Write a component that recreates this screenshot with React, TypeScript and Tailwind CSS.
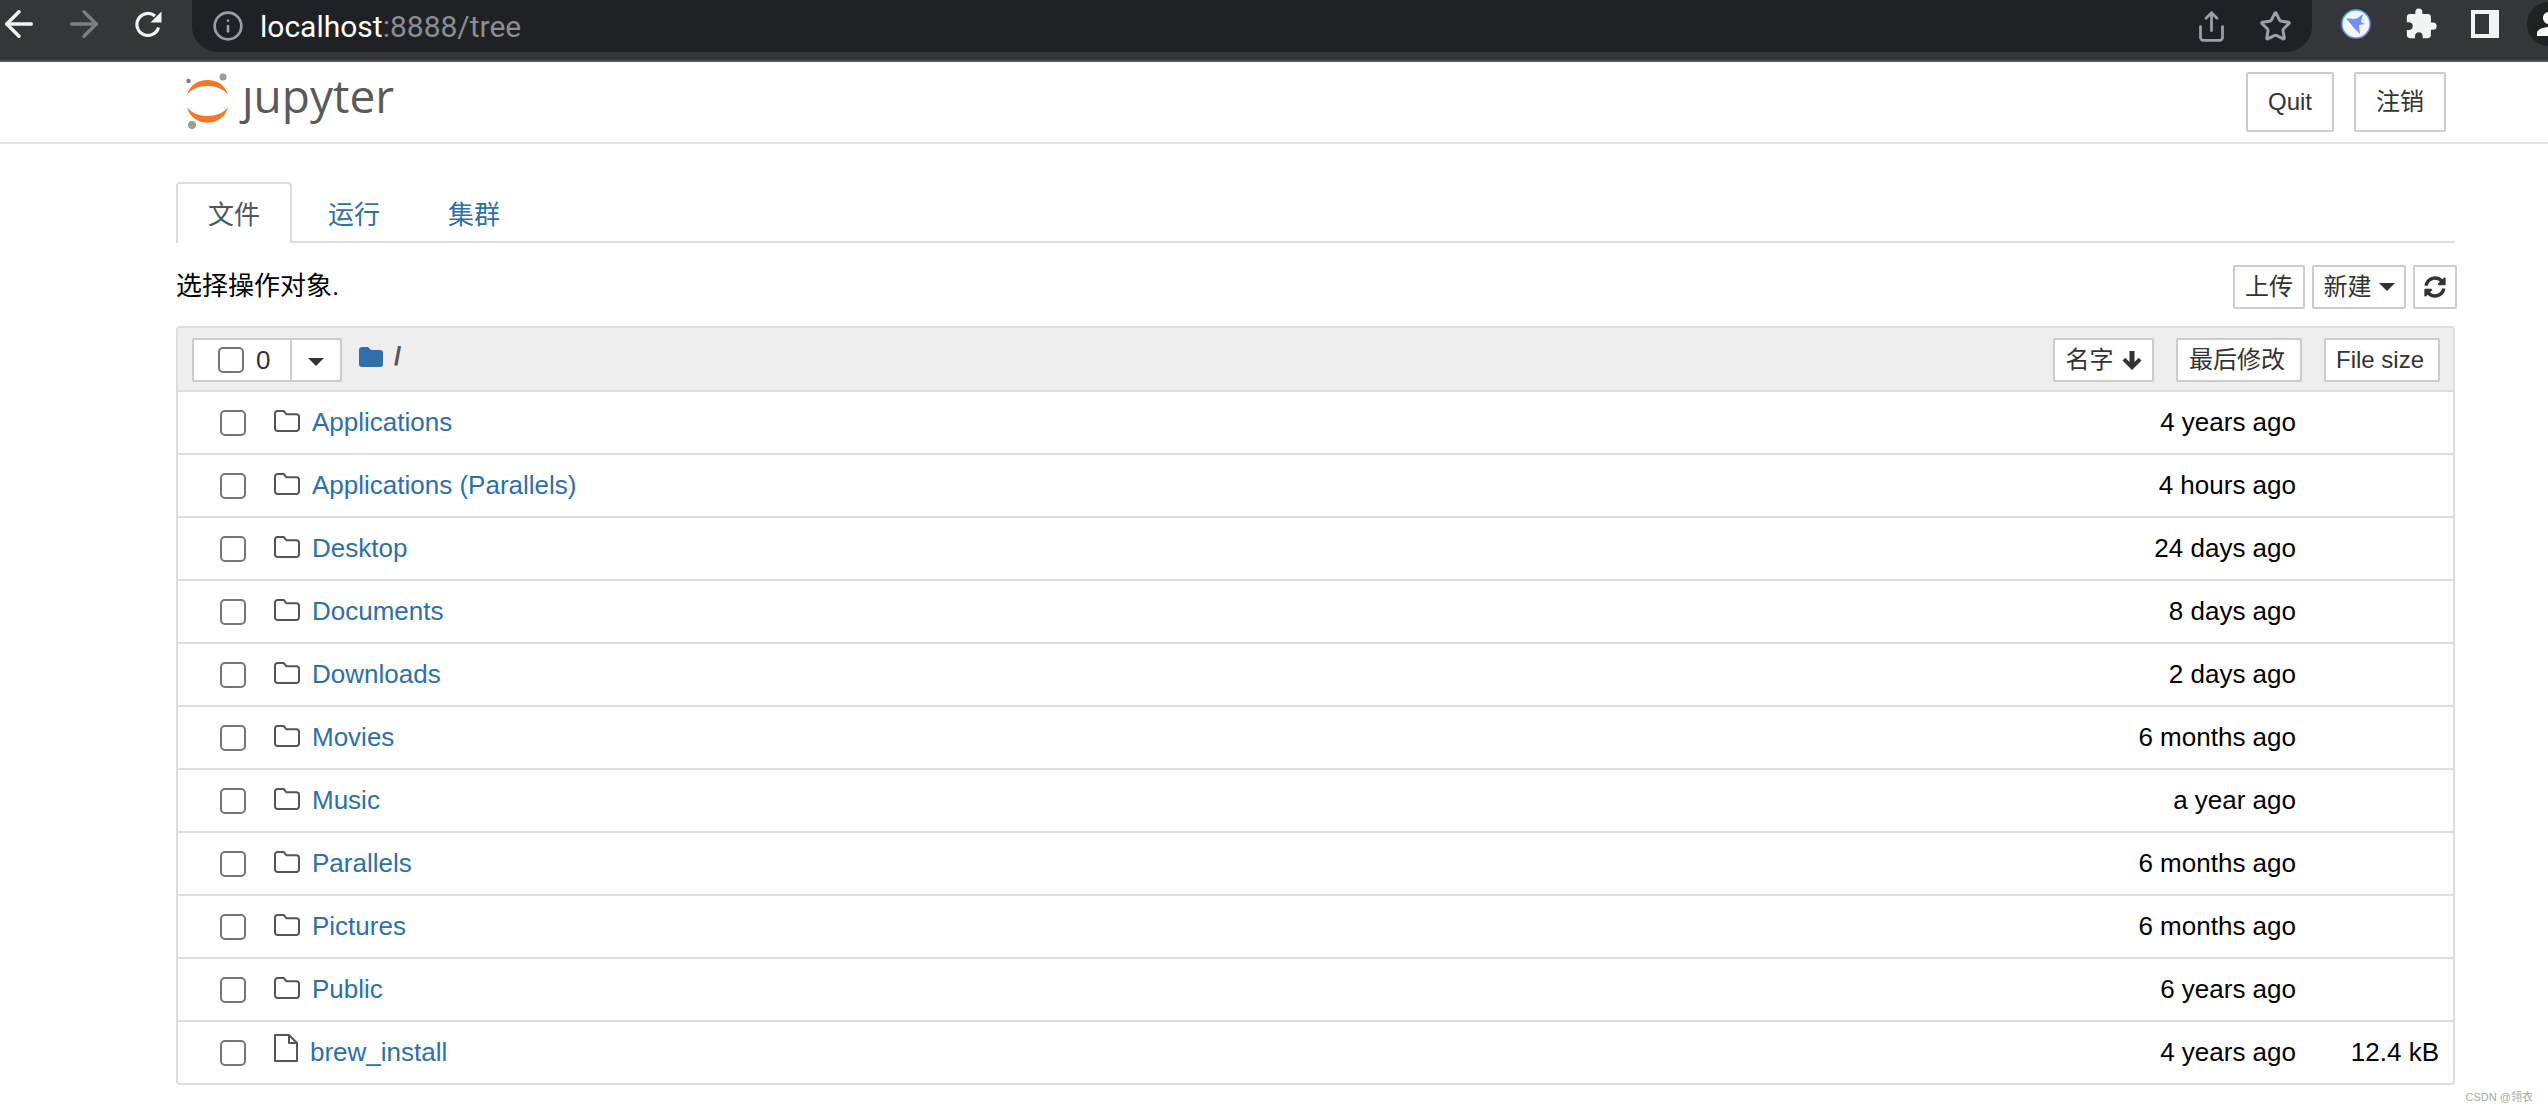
import { ArrowLeft, ArrowRight, Info, Share, Star } from "lucide-react";
import { FaSyncAlt } from "react-icons/fa";
import { MdExtension, MdPerson } from "react-icons/md";

const FONT = "font-['Liberation_Sans','Noto_Sans_CJK_SC',sans-serif]";

const ROWS = [
  { name: "Applications", time: "4 years ago" },
  { name: "Applications (Parallels)", time: "4 hours ago" },
  { name: "Desktop", time: "24 days ago" },
  { name: "Documents", time: "8 days ago" },
  { name: "Downloads", time: "2 days ago" },
  { name: "Movies", time: "6 months ago" },
  { name: "Music", time: "a year ago" },
  { name: "Parallels", time: "6 months ago" },
  { name: "Pictures", time: "6 months ago" },
  { name: "Public", time: "6 years ago" },
  { name: "brew_install", time: "4 years ago", size: "12.4 kB", file: true },
];

function FolderOutline() {
  return (
    <svg width="26" height="22" viewBox="0 0 26 22" fill="none" stroke="#555" strokeWidth="2" strokeLinejoin="round">
      <path d="M3.500 1h6.200l2.600 3.200h10.200a2.500 2.500 0 0 1 2.500 2.500v11.800a2.500 2.500 0 0 1-2.500 2.500h-19A2.500 2.500 0 0 1 1 18.500v-15A2.500 2.500 0 0 1 3.500 1z" />
    </svg>
  );
}

function FolderSolid() {
  return (
    <svg width="24" height="20" viewBox="0 0 24 20" fill="#2f6fab">
      <path d="M3 0h6l3 3h9a3 3 0 0 1 3 3v11a3 3 0 0 1-3 3H3a3 3 0 0 1-3-3V3a3 3 0 0 1 3-3z" />
    </svg>
  );
}

function FileOutline() {
  return (
    <svg width="24" height="28" viewBox="0 0 24 28" fill="none" stroke="#555" strokeWidth="2" strokeLinejoin="round">
      <path d="M1 1h14l8 8v18H1z" />
      <path d="M15 1v8h8" />
    </svg>
  );
}

function SortArrow() {
  return (
    <svg width="20" height="19" viewBox="0 0 20 19" fill="#333">
      <path d="M10 19 0.500 9.500 3.300 6.700 7.500 10.900V0h5v10.900l4.200-4.200 2.800 2.800z" />
    </svg>
  );
}

function ReloadIcon() {
  return (
    <svg width="28" height="28" viewBox="0 0 28 28" fill="none">
      <path d="M24.500 17.500A11 11 0 1 1 21 6" stroke="#f1f3f4" strokeWidth="3.200" />
      <path d="M27.500 1.500V12.500H16.500z" fill="#f1f3f4" />
    </svg>
  );
}

function JupyterLogo() {
  return (
    <svg width="44" height="58" viewBox="0 0 44 58">
      <circle cx="37" cy="5" r="3.500" fill="#9a9a9a" />
      <circle cx="2.500" cy="9" r="2.200" fill="#7a7a7a" />
      <circle cx="6" cy="53" r="4" fill="#9a9a9a" />
      <path d="M1 23C6 3 37 3 42 23C34 11 9 11 1 23Z" fill="#f37726" />
      <path d="M1 35C9 47 34 47 42 35C37 56 6 56 1 35Z" fill="#f37726" />
    </svg>
  );
}

function BirdLogo() {
  return (
    <svg width="30" height="30" viewBox="0 0 30 30">
      <defs>
        <linearGradient id="ring" x1="0" y1="0" x2="1" y2="1">
          <stop offset="0" stopColor="#38b6f0" />
          <stop offset="1" stopColor="#a878f0" />
        </linearGradient>
        <linearGradient id="bird" x1="0" y1="0" x2="1" y2="1">
          <stop offset="0" stopColor="#4f9cf0" />
          <stop offset="1" stopColor="#9a80f2" />
        </linearGradient>
      </defs>
      <circle cx="15" cy="15" r="14" fill="#f4f6fd" stroke="url(#ring)" strokeWidth="1.500" />
      <path d="M5 9 L11 10 L16 9.500 L22 5 L20 13 L24 15 L18 16 L19 25 L13 19 L9 14 Z" fill="url(#bird)" />
    </svg>
  );
}

function Checkbox() {
  return <span className="block h-[26px] w-[26px] shrink-0 rounded-[5px] border-2 border-[#767676] bg-white" />;
}

function Caret() {
  return <span className="inline-block h-0 w-0 border-x-[8px] border-t-[8px] border-x-transparent border-t-[#333]" />;
}

function Btn({ className, children }: { className: string; children: React.ReactNode }) {
  return (
    <button className={`flex h-[44px] items-center justify-center rounded-[2px] border-2 border-[#ccc] bg-white text-[24px] text-[#333] ${className}`}>
      {children}
    </button>
  );
}

function BrowserBar() {
  return (
    <div className="flex h-[62px] items-start border-b-2 border-[#55565a] bg-[#35363a]">
      <div className="flex h-[52px] w-[192px] shrink-0 items-center pb-[4px]">
        <ArrowLeft className="-ml-[2px] h-[42px] w-[42px] text-[#f1f3f4]" strokeWidth={2} />
        <ArrowRight className="ml-[23px] h-[42px] w-[42px] text-[#7d7e81]" strokeWidth={2} />
        <span className="ml-[29px]"><ReloadIcon /></span>
      </div>
      <div className="flex h-[52px] w-[2120px] shrink-0 items-center rounded-b-[26px] bg-[#202124] pl-[20px] font-['Roboto',sans-serif] text-[30px]">
        <Info className="h-[32px] w-[32px] text-[#9aa0a6]" strokeWidth={2} />
        <span className="ml-[16px] text-white">localhost</span>
        <span className="text-[#8b8d90]">:8888/tree</span>
        <Share className="ml-auto h-[33px] w-[33px] text-[#9aa0a6]" strokeWidth={2} />
        <Star className="ml-[31px] mr-[20px] h-[33px] w-[33px] text-[#9aa0a6]" strokeWidth={2.200} />
      </div>
      <div className="flex h-[52px] flex-1 items-center pb-[4px]">
        <span className="ml-[29px]"><BirdLogo /></span>
        <MdExtension className="ml-[33px] text-[#f1f3f4]" size={34} />
        <span className="ml-[33px] block h-[28px] w-[28px] shrink-0 border-[4px] border-r-[10px] border-[#f1f3f4]" />
        <span className="ml-[28px] flex h-[44px] w-[44px] shrink-0 items-center justify-center rounded-full bg-[#202124]">
          <MdPerson className="shrink-0 text-white" size={36} />
        </span>
      </div>
    </div>
  );
}

function NavBar() {
  return (
    <div className="flex h-[82px] items-start border-b-2 border-[#e7e7e7] bg-white pl-[186px] pr-[102px]">
      <div className="mt-[10px]"><JupyterLogo /></div>
      <span className="ml-[12px] mt-[2px] font-['Open_Sans',sans-serif] text-[46px] font-normal leading-[62px] text-[#5a5a5a]">ȷupyter</span>
      <div className="ml-auto mt-[10px] flex gap-[20px]">
        <Btn className="h-[60px] w-[88px]">Quit</Btn>
        <Btn className="h-[60px] w-[92px]">注销</Btn>
      </div>
    </div>
  );
}

function Tabs() {
  return (
    <div className="mt-[38px] flex h-[61px] border-b-2 border-[#ddd] text-[26px] leading-[62px]">
      <a className="h-[61px] rounded-t-[4px] border-2 border-b-0 border-[#ddd] bg-white px-[30px] text-[#555]">文件</a>
      <a className="ml-[4px] border-2 border-b-0 border-transparent px-[30px] text-[#2d6fa9]">运行</a>
      <a className="ml-[4px] border-2 border-b-0 border-transparent px-[30px] text-[#2d6fa9]">集群</a>
    </div>
  );
}

function Toolbar() {
  return (
    <div className="mt-[21px] flex h-[46px] items-center justify-between text-[26px] text-black">
      <span className="pb-[2px]">选择操作对象.</span>
      <div className="-mr-[2px] flex gap-[7px]">
        <Btn className="w-[72px]">上传</Btn>
        <Btn className="w-[94px] gap-[7px]">新建<Caret /></Btn>
        <Btn className="w-[44px]"><FaSyncAlt size={22} /></Btn>
      </div>
    </div>
  );
}

function ListHeader() {
  return (
    <div className="flex h-[64px] items-center border-b-2 border-[#ddd] bg-[#eee] pl-[14px] pr-[13px] pt-[2px]">
      <div className="flex h-[44px] w-[150px] rounded-[2px] border-2 border-[#ccc] bg-white">
        <div className="flex w-[98px] items-center border-r-2 border-[#ccc] pl-[24px] text-[26px] text-[#333]">
          <Checkbox />
          <span className="ml-[12px]">0</span>
        </div>
        <div className="flex flex-1 items-center justify-center pt-[3px]"><Caret /></div>
      </div>
      <span className="ml-[17px] mb-[7px]"><FolderSolid /></span>
      <span className="ml-[11px] mb-[7px] text-[26px] font-bold text-[#555]">/</span>
      <div className="ml-auto flex gap-[22px]">
        <Btn className="w-[101px] gap-[8px]">名字<SortArrow /></Btn>
        <Btn className="w-[126px] pr-[4px]">最后修改</Btn>
        <Btn className="w-[116px] pr-[4px]">File size</Btn>
      </div>
    </div>
  );
}

function FileRow({ name, time, size, file }: { name: string; time: string; size?: string; file?: boolean }) {
  return (
    <div className="flex h-[63px] items-center border-b-2 border-[#ddd] pl-[42px] pr-[14px] text-[26px] last:h-[61px] last:border-b-0">
      <Checkbox />
      <span className={`ml-[28px] flex w-[26px] justify-start ${file ? "mb-[9px]" : "mb-[4px]"}`}>{file ? <FileOutline /> : <FolderOutline />}</span>
      <a className={`${file ? "ml-[10px]" : "ml-[12px]"} text-[#2d6fa9]`}>{name}</a>
      <span className="ml-auto text-black">{time}</span>
      <span className="w-[143px] text-right text-black">{size}</span>
    </div>
  );
}

export default function App() {
  return (
    <div className={`h-[1112px] w-[2548px] overflow-hidden bg-white ${FONT}`}>
      <BrowserBar />
      <NavBar />
      <div className="ml-[176px] w-[2279px]">
        <Tabs />
        <Toolbar />
        <div className="mt-[16px] overflow-hidden rounded-[4px] border-2 border-[#ddd]">
          <ListHeader />
          {ROWS.map((r) => <FileRow key={r.name} {...r} />)}
        </div>
      </div>
      <div className="mr-[15px] mt-[3px] text-right text-[11px] leading-[18px] text-[#aaa]">CSDN @翎衣</div>
    </div>
  );
}
